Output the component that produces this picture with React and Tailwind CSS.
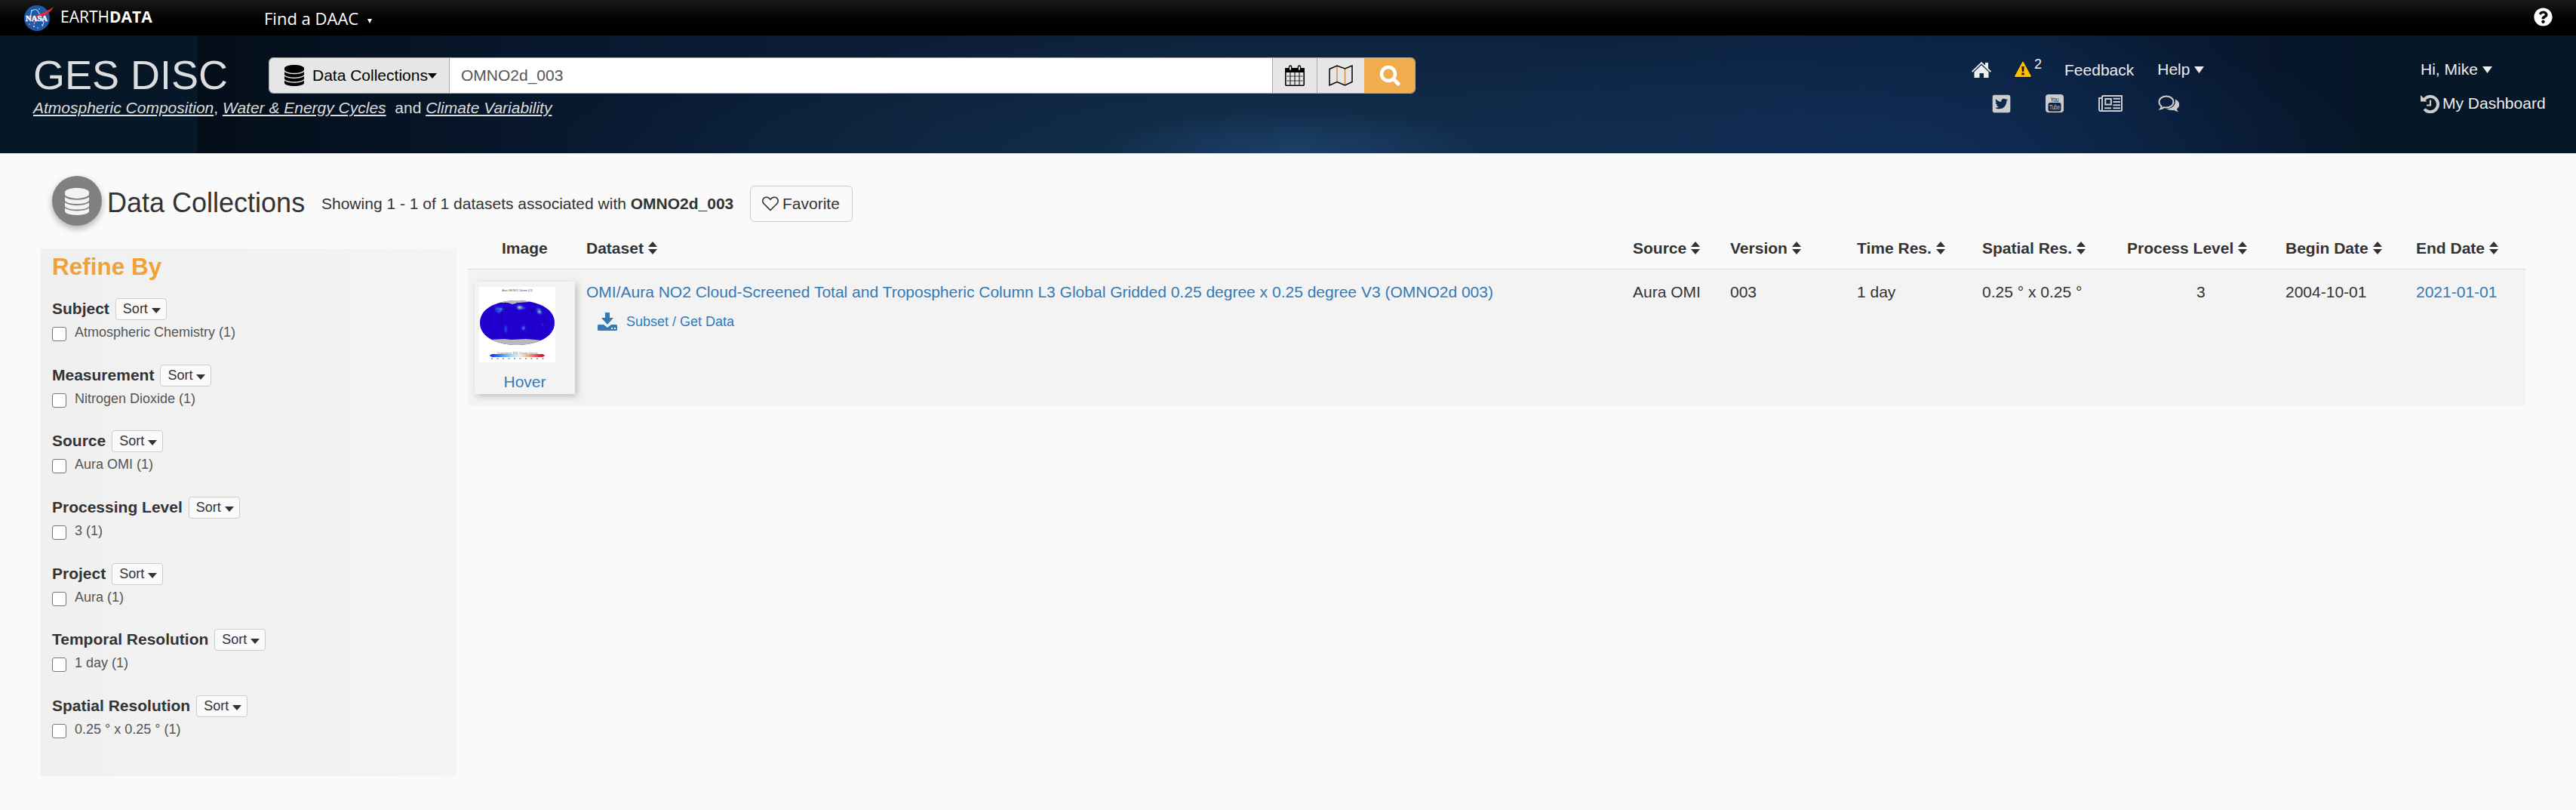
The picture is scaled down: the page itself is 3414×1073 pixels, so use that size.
import React from "react";
import { FaQuestionCircle, FaTwitterSquare } from "react-icons/fa";

const Caret = ({ className = "" }) => (
  <svg viewBox="0 0 12 7" className={"inline-block h-[7px] w-3 " + className} fill="currentColor"><path d="M0 0h12L6 7z" /></svg>
);

const BigCaret = () => (
  <svg viewBox="0 0 13 9" className="ml-[6px] h-[9px] w-[13px] shrink-0" fill="currentColor"><path d="M0 0h13L6.500 9z" /></svg>
);

const NasaLogo = () => (
  <svg viewBox="0 0 42 36" className="h-9 w-[42px]">
    <circle cx="19" cy="18" r="17" fill="#1a5aa8" />
    <g fill="#fff"><circle cx="12" cy="8" r=".8" /><circle cx="22" cy="6" r=".7" /><circle cx="26" cy="27" r=".8" /><circle cx="15" cy="29" r=".9" /><circle cx="9" cy="26" r=".7" /><circle cx="20" cy="31" r=".7" /></g>
    <path d="M10 17 12 8q5-3 8 0l8 16-2 5M15 26l3-8" fill="none" stroke="#dbe7f5" strokeWidth="1" />
    <path d="M0 23C10 16 27 13 41 3 37 13 20 19 5 33 14 22 27 17 33 12 24 17 10 18 0 23Z" fill="#dc2a3e" />
    <text x="18.500" y="21.500" textAnchor="middle" textLength="29" lengthAdjust="spacingAndGlyphs" fontFamily="Liberation Serif" fontWeight="700" fontSize="10" fill="#fff" stroke="#fff" strokeWidth=".4">NASA</text>
  </svg>
);

const Database = ({ className }) => (
  <svg viewBox="0 0 26 28" preserveAspectRatio="none" className={className} fill="currentColor">
    <path d="M0 4.500C0 2 5.800 0 13 0s13 2 13 4.500v1.800c0 2.500-5.800 4.500-13 4.500S0 8.800 0 6.300z" />
    <path d="M0 9.300c2.800 2 7.700 3 13 3s10.200-1 13-3v3.200c0 2.300-5.800 4-13 4s-13-1.700-13-4z" />
    <path d="M0 15c2.800 2 7.700 3 13 3s10.200-1 13-3v3.200c0 2.300-5.800 4-13 4s-13-1.700-13-4z" />
    <path d="M0 20.700c2.800 2 7.700 3 13 3s10.200-1 13-3V24c0 2.300-5.800 4-13 4S0 26.300 0 24z" />
  </svg>
);

const HomeIcon = () => (
  <svg viewBox="0 0 26 21" className="h-[21px] w-[26px] shrink-0" fill="#eee">
    <path d="M13 0 18 4.500V1h4v7.500l4 4-1.200 1.200L13 2.500 1.200 13.700 0 12.500z" /><path d="M13 4.200l9.500 9V21h-6.500v-6h-5.500v6H3.500v-7.800z" />
  </svg>
);

const WarningIcon = () => (
  <svg viewBox="0 0 24 22" className="ml-[30px] h-[22px] w-6 shrink-0">
    <path d="M12 1.500 22.500 20.500h-21z" fill="#ffbf00" stroke="#000" strokeWidth="3" strokeLinejoin="round" opacity=".55" />
    <path d="M12 1.500 22 20H2z" fill="#ffbf00" stroke="#ffbf00" strokeWidth="1.800" strokeLinejoin="round" />
    <path d="M10.300 7h3.400l-.6 7h-2.200zM10.400 15.500h3.200v2.800h-3.200z" fill="#1c1600" />
  </svg>
);

const YoutubeIcon = () => (
  <svg viewBox="0 0 24 24" className="size-6 shrink-0 overflow-visible">
    <rect width="24" height="24" rx="4" fill="#ccc" /><rect x="3.500" y="11" width="17" height="11.500" rx="2.500" fill="#0b2443" />
    <text x="12" y="9.500" textAnchor="middle" fontFamily="Liberation Sans" fontSize="9.500" textLength="11" lengthAdjust="spacingAndGlyphs" fill="#0b2443">You</text>
    <text x="12" y="20.200" textAnchor="middle" fontFamily="Liberation Sans" fontSize="9.500" textLength="14" lengthAdjust="spacingAndGlyphs" fill="#ccc">Tube</text>
  </svg>
);

const NewsIcon = () => (
  <svg viewBox="0 0 32 22" className="ml-[46px] h-[22px] w-8 shrink-0" fill="none" stroke="#ccc" strokeWidth="2">
    <path d="M5 1h26v18.500q0 1.500-1.500 1.500H3.500" /><path d="M5 1v18q0 2-2 2t-2-2V4h4" />
    <rect x="9.300" y="5" width="7.500" height="7.500" /><path d="M19.500 4.800H29M19.500 9H29M19.500 13.300H29M8 17.300h9M19.500 17.300H29" />
  </svg>
);

const CommentsIcon = () => (
  <svg viewBox="0 0 29 23" className="ml-[47px] h-[23px] w-[29px] shrink-0">
    <path d="M11 1.500c5.300 0 9.500 3.200 9.500 7.500s-4.200 7.500-9.500 7.500c-1 0-2-.1-3-.4-1.500 1.200-3 1.800-4.800 2.100.9-1 1.400-2 1.500-3.400C2.700 13.500 1.500 11.400 1.500 9c0-4.300 4.200-7.500 9.500-7.500z" fill="none" stroke="#ccc" strokeWidth="2" />
    <path d="M22.800 5.500c3.300 1.300 5.400 3.900 5.400 6.900 0 2.300-1.200 4.300-3.200 5.800.2 1.400.9 2.500 2 3.800-2.300-.2-4.100-1-5.700-2.300-3.800.8-7.500.1-10-1.600 7.500-.1 13-4.600 11.500-12.600z" fill="#ccc" />
  </svg>
);

const HistoryIcon = () => (
  <svg viewBox="0 0 25 25" className="mr-1 size-[25px] shrink-0" fill="none" stroke="#ccc">
    <path d="M4.500 7.200A10.200 10.200 0 1 1 5 19.500" strokeWidth="4" /><path d="M0 1v8.500h8.500z" fill="#ccc" stroke="none" /><path d="M13 7.500v7H8" strokeWidth="2.200" />
  </svg>
);

const CalendarIcon = () => (
  <svg viewBox="0 0 26 28" className="h-7 w-[26px]">
    <rect x=".8" y="5" width="24.400" height="22.200" rx="1" fill="#e6e6e6" stroke="#000" strokeWidth="1.600" />
    <path d="M0 4h26v6H0z" fill="#000" />
    <path d="M1 15h24M1 21h24" stroke="#777" strokeWidth="1.500" /><path d="M7 10v17M13 10v17M19 10v17" stroke="#222" strokeWidth="1.200" />
    <rect x="5.500" y="1" width="3.200" height="6.500" rx="1.600" fill="#e6e6e6" stroke="#000" strokeWidth="1.300" />
    <rect x="17.300" y="1" width="3.200" height="6.500" rx="1.600" fill="#e6e6e6" stroke="#000" strokeWidth="1.300" />
  </svg>
);

const MapIcon = () => (
  <svg viewBox="0 0 32 28" className="h-7 w-8" fill="none">
    <path d="M11 2v20M21.500 5v21" stroke="#c98a45" strokeWidth="1.400" />
    <path d="M1 5.500 11 1l10.500 4L31 1v21.500L21.500 27 11 22.500 1 27z" stroke="#000" strokeWidth="1.500" />
  </svg>
);

const SearchIcon = () => (
  <svg viewBox="0 0 28 28" className="size-7" fill="none" stroke="#fff"><circle cx="12" cy="12" r="9" strokeWidth="4.500" /><path d="M19 19l6 6" strokeWidth="5" strokeLinecap="round" /></svg>
);

const HeartIcon = () => (
  <svg viewBox="0 0 22 20" className="mr-[5px] h-5 w-[22px] shrink-0" fill="none" stroke="#333" strokeWidth="1.600" strokeLinejoin="round">
    <path d="M11 18.500 2.500 10C-1 6 1.500 1.200 5.800 1.200 8.500 1.200 10 2.800 11 4.300c1-1.500 2.500-3.100 5.200-3.100C20.500 1.200 23 6 19.500 10z" />
  </svg>
);

const SortIcon = () => (
  <svg viewBox="0 0 12 17" className="ml-1.5 h-[17px] w-3 shrink-0" fill="#333"><path d="M6 0l6 7H0zM0 10h12l-6 7z" /></svg>
);

const DownloadIcon = () => (
  <svg viewBox="0 0 26 24" className="h-6 w-[26px] shrink-0" fill="#337ab7">
    <path d="M10 0h6v7h5l-8 9-8-9h5z" />
    <path fillRule="evenodd" d="M1.500 16H8l5 4 5-4h6.500q1.500 0 1.500 1.500v5Q26 24 24.500 24h-23Q0 24 0 22.500v-5Q0 16 1.500 16zM18 20v2h2v-2zm4 0v2h2v-2z" />
  </svg>
);

const Thumbnail = () => (
  <svg viewBox="0 0 101 100" className="ml-1.5 h-[100px] w-[101px] bg-white">
    <defs>
      <linearGradient id="scale"><stop offset="0" stopColor="#2b18d8" /><stop offset=".2" stopColor="#3c86f4" /><stop offset=".42" stopColor="#a5e4f3" /><stop offset=".55" stopColor="#f3f0dc" /><stop offset=".72" stopColor="#efa073" /><stop offset=".87" stopColor="#e8393c" /><stop offset="1" stopColor="#a81435" /></linearGradient>
      <clipPath id="globe"><path d="M50 18C74 18 100 27 100 47.500S74 77 50 77 1 68 1 47.500 26 18 50 18z" /></clipPath>
      <filter id="soft"><feGaussianBlur stdDeviation="1" /></filter>
    </defs>
    <text x="50.500" y="6" textAnchor="middle" fontFamily="Liberation Sans" fontSize="3.200" fill="#333" textLength="40">Aura OMI NO2 Column (L3)</text>
    <g clipPath="url(#globe)">
      <path d="M0 18h101v60H0z" fill="#2200d2" />
      <path d="M22 18h58v2H66l-14 1-8 2-6-2H22zM14 70l20-1 8 1 20-1 12 1 18 2v7H14z" fill="#b9b9b9" />
      <g filter="url(#soft)" fill="#2e72f2"><path d="M21 27l10 1 3 2-6 3-2 2-4-3zM49 25l10 1 3 3-7 1-5-1zM76 28l6 1 2 6-4 1-4-4zM34 51l2 1 1 5-2 5-1-6zM58 51l3 3-2 4-3-3zM83 49l3 0-2 3z" opacity=".75" /><path d="M51 25.500l5 0 0 3-4 1zM79 30l2 2-1 4-2-3zM27 29l3 1-2 2zM59 53l1 2-2 1z" fill="#a5e0c0" /></g>
      <path d="M2 47h97M8 31h86M10 64h82M50 20v49M35 20q-12 27 0 49M66 20q12 27 0 49M20 22q-12 24 0 46M80 22q12 24 0 46" fill="none" stroke="#15008c" strokeWidth=".5" />
    </g>
    <text x="50.500" y="89" textAnchor="middle" fontFamily="Liberation Sans" fontSize="3" fill="#555" textLength="54">Tropospheric NO2 Column Density</text>
    <path d="M13.500 91l3.500-2h67l3.500 2-3.500 2H17z" fill="url(#scale)" />
    <path d="M16 95h70" stroke="#888" strokeWidth="1.500" strokeDasharray="2 5.500" />
  </svg>
);

const filters = [
  ["Subject", "Atmospheric Chemistry (1)"],
  ["Measurement", "Nitrogen Dioxide (1)"],
  ["Source", "Aura OMI (1)"],
  ["Processing Level", "3 (1)"],
  ["Project", "Aura (1)"],
  ["Temporal Resolution", "1 day (1)"],
  ["Spatial Resolution", "0.25 ° x 0.25 ° (1)"],
];

const columns = [
  ["Dataset", "w-[1387px]"],
  ["Source", "w-[129px]"],
  ["Version", "w-[168px]"],
  ["Time Res.", "w-[166px]"],
  ["Spatial Res.", "w-[192px]"],
  ["Process Level", "w-[210px]"],
  ["Begin Date", "w-[173px]"],
  ["End Date", "w-[145px]"],
];

function Header() {
  return (
    <header>
      <div className="flex h-[47px] items-start justify-between bg-linear-to-b from-[#1a1a1a] to-black pr-[31px] pl-[30px] text-white">
        <div className="flex items-start font-['Open_Sans',sans-serif]">
          <div className="mt-[6px]"><NasaLogo /></div>
          <div className="ml-[8px] w-[270px] pt-[7px] text-[21px] leading-[30px]">EARTH<b>DATA</b></div>
          <div className="flex pt-[8px] text-[22px] leading-[32px]">Find a DAAC<svg viewBox="0 0 6 6" className="mt-[17px] ml-3 size-[6px]" fill="#fff"><path d="M0 0h6L3 6z" /></svg></div>
        </div>
        <FaQuestionCircle className="mt-[10px] size-[25px]" />
      </div>
      <div className="h-[156px] bg-[#061727]">
        <div className="flex h-full bg-[radial-gradient(ellipse_260px_60px_at_1455px_156px,#1c406a_0%,transparent_100%),radial-gradient(ellipse_650px_190px_at_2230px_156px,#12305acc_0%,transparent_100%),radial-gradient(ellipse_1000px_170px_at_1450px_156px,#12304d_0%,transparent_100%),linear-gradient(90deg,#040e19_0px,#061323_240px,#08182f_500px,#0e213c_1300px,#0c223f_2000px,#0a2140_2400px,#07162c_2750px,#061727_2893px)] [background-size:2893px_156px] [background-position:262px_0] bg-no-repeat">
          <div className="w-[2613px] pt-[25px] pl-[44px] text-[#ddd]">
            <div className="flex">
              <h1 className="w-[312px] text-[54px] leading-[54px]">GES DISC</h1>
              <div className="mt-1 flex h-12 w-[1520px] overflow-hidden rounded-md border border-[#aaa] text-[21px] text-black">
                <div className="flex w-[239px] items-center border-r border-[#aaa] bg-[#e6e6e6] pl-[20px]"><Database className="mr-[11px] h-7 w-[26px] shrink-0" /><span className="whitespace-nowrap">Data Collections</span><Caret className="shrink-0" /></div>
                <div className="flex w-[1090px] items-center bg-white pl-[15px] text-[#555]">OMNO2d_003</div>
                <div className="flex w-[60px] items-center justify-center border-x border-[#aaa] bg-[#e6e6e6]"><CalendarIcon /></div>
                <div className="flex w-[62px] items-center justify-center bg-[#e6e6e6]"><MapIcon /></div>
                <div className="flex flex-1 items-center justify-center bg-[#f0ad4e]"><SearchIcon /></div>
              </div>
            </div>
            <div className="mt-[2px] flex text-[21px] leading-[30px] whitespace-pre"><i className="underline">Atmospheric Composition</i>, <i className="underline">Water &amp; Energy Cycles</i>  and <i className="underline">Climate Variability</i></div>
          </div>
          <div className="w-[595px] text-[21px] text-[#eee]">
            <div className="mt-[30px] flex h-[30px] items-center">
              <HomeIcon />
              <WarningIcon />
              <span className="ml-[3px] h-[30px] text-[18px] leading-[16px]">2</span>
              <span className="ml-[30px] pt-px">Feedback</span>
              <span className="ml-[31px]">Help</span><BigCaret />
            </div>
            <div className="mt-[15px] flex h-[30px] items-center pl-[26px]">
              <FaTwitterSquare className="mr-[45px] size-[27px] text-[#ccc]" /><YoutubeIcon /><NewsIcon /><CommentsIcon />
            </div>
          </div>
          <div className="text-[21px] text-[#eee]">
            <div className="mt-[30px] flex h-[30px] items-center whitespace-nowrap">Hi, Mike<BigCaret /></div>
            <div className="mt-[15px] flex h-[30px] items-center"><HistoryIcon /><span className="whitespace-nowrap">My Dashboard</span></div>
          </div>
        </div>
      </div>
    </header>
  );
}

function Sidebar() {
  return (
    <aside className="h-[699px] w-[551px] shrink-0 bg-linear-to-r from-[#f0f0f0] to-[#f4f4f4] pl-[15px]">
      <h2 className="h-[66px] pt-[4px] text-[31.5px] leading-[40px] font-bold text-[#f0a236]">Refine By</h2>
      {filters.map(([title, option]) => (
        <section key={title} className="h-[87.66px]">
          <div className="flex h-8 items-start text-[21px] font-bold">
            <span className="-mt-px leading-[30px]">{title}</span>
            <button className="ml-2 flex h-[29px] w-[68px] items-center rounded-[4px] border border-[#ccc] bg-[#fafafa] pl-[9px] text-[18px] font-normal">Sort<Caret className="mt-1 ml-[5px] shrink-0" /></button>
          </div>
          <label className="flex text-[18px] text-[#555]">
            <span className="mt-[6px] size-[19px] rounded-[3px] border border-[#767676] bg-white" />
            <span className="ml-[11px] leading-[27px]">{option}</span>
          </label>
        </section>
      ))}
    </aside>
  );
}

function Results() {
  return (
    <main className="-mt-[30px] ml-[15px] w-[2727px]">
      <div className="flex h-[58px] items-center border-b border-[#ddd] bg-[#f9f9f9] pt-[2px] font-bold">
        <div className="w-[157px] pl-[45px]">Image</div>
        {columns.map(([name, width]) => (
          <div key={name} className={"flex shrink-0 items-center whitespace-nowrap " + width}>{name}<SortIcon /></div>
        ))}
      </div>
      <div className="flex h-[180px] bg-[#f3f3f3] pt-[15px] leading-[30px]">
        <div className="w-[157px] pl-[9px]">
          <div className="mt-px h-[149px] w-[133px] bg-[#f3f3f3] pt-[7px] shadow-[3px_3px_9px_rgba(0,0,0,0.22)]"><Thumbnail /><div className="mt-[11px] text-center text-[#337ab7]">Hover</div></div>
        </div>
        <div className="w-[1387px] text-[#337ab7]">
          <div className="whitespace-nowrap">OMI/Aura NO2 Cloud-Screened Total and Tropospheric Column L3 Global Gridded 0.25 degree x 0.25 degree V3 (OMNO2d 003)</div>
          <div className="mt-[9px] flex items-center pl-[15px] text-[18px]"><DownloadIcon /><span className="ml-3">Subset / Get Data</span></div>
        </div>
        <div className="w-[129px]">Aura OMI</div>
        <div className="w-[168px]">003</div>
        <div className="w-[166px]">1 day</div>
        <div className="w-[192px]">0.25 ° x 0.25 °</div>
        <div className="w-[210px] pl-[92px]">3</div>
        <div className="w-[173px]">2004-10-01</div>
        <div className="text-[#337ab7]">2021-01-01</div>
      </div>
    </main>
  );
}

export default function App() {
  return (
    <div className="h-[1073px] w-[3414px] overflow-hidden bg-[#fafafa] font-['Liberation_Sans',Arial,sans-serif] text-[21px] text-[#333]">
      <Header />
      <div className="flex h-[126px] items-start pt-[30px] pl-[69px]">
        <div className="flex size-[66px] items-center justify-center rounded-full bg-[#808080] text-[#f3f3f3] shadow-[0_4px_8px_rgba(0,0,0,0.3)]"><Database className="mt-0.5 h-[36px] w-8" /></div>
        <h2 className="ml-[7px] w-[284px] pt-[16px] text-[36px] leading-[40px]">Data Collections</h2>
        <div className="w-[568px] pt-[22px] leading-[30px] whitespace-nowrap">Showing 1 - 1 of 1 datasets associated with <b>OMNO2d_003</b></div>
        <button className="mt-[13px] flex h-12 w-[136px] items-center rounded-md border border-[#ccc] bg-[#fafafa] pl-[15px]"><HeartIcon />Favorite</button>
      </div>
      <div className="flex pl-[54px]"><Sidebar /><Results /></div>
    </div>
  );
}
